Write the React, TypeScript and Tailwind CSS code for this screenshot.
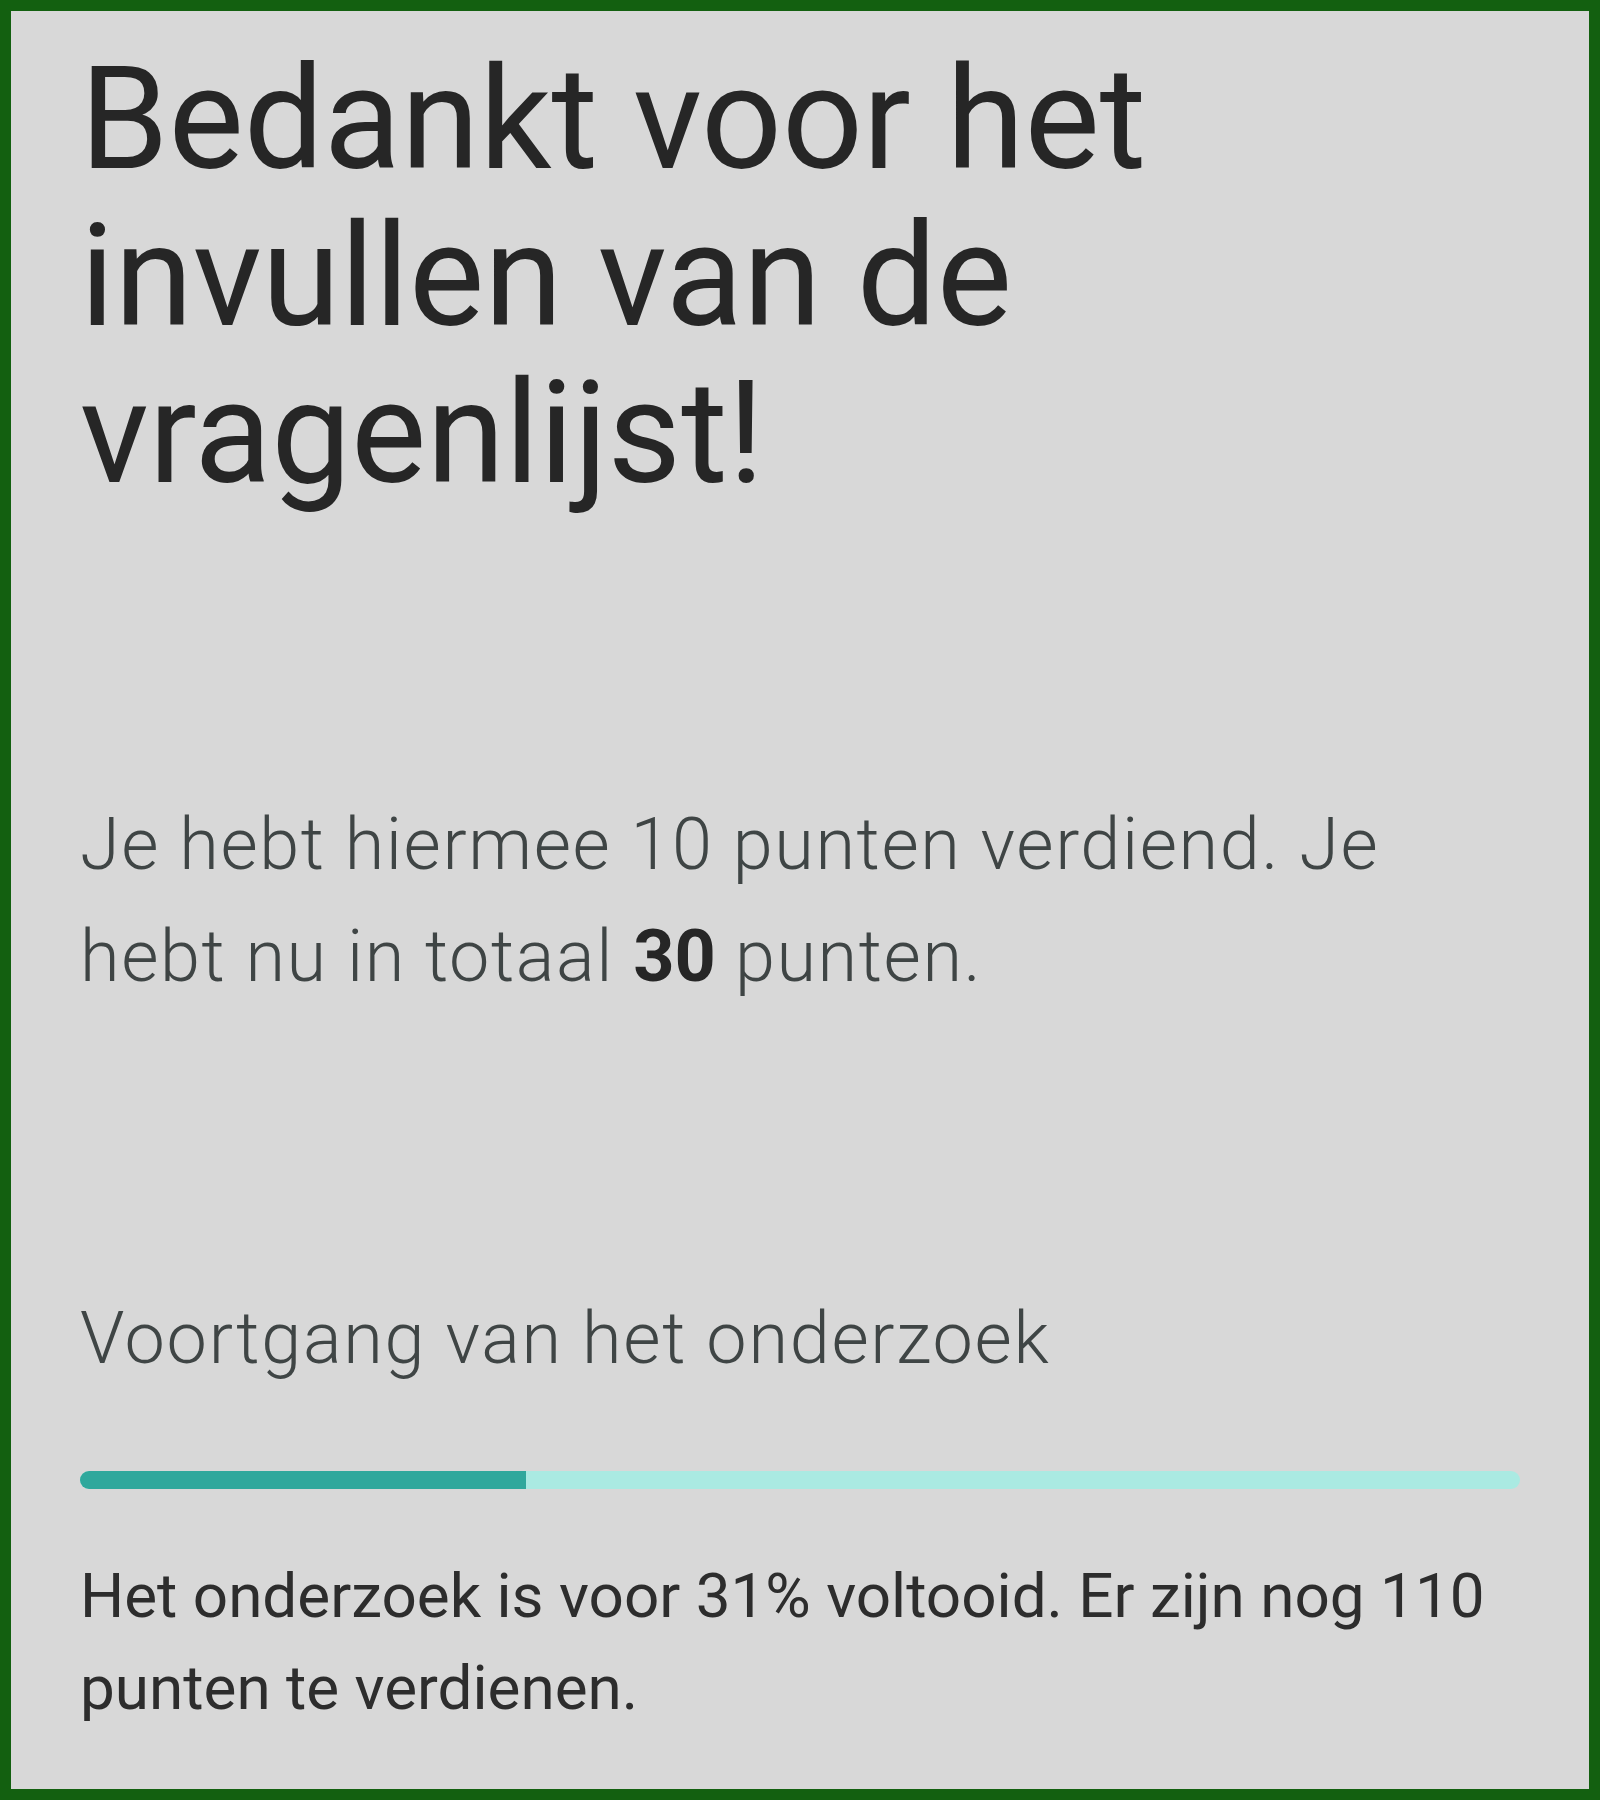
export default function App() {
  return (
    <div className="w-[1600px] h-[1800px] bg-[#136010] p-[11px]">
      <div className="flex h-full w-full flex-col bg-[#d8d8d8] pl-[69px] pr-[69px] pt-[30px]" style={{ fontFamily: "Roboto, 'Noto Sans', sans-serif" }}>
        <h1 className="text-[142px] leading-[157px] font-normal text-[#262626]">
          Bedankt voor het
          <br />
          invullen van de
          <br />
          vragenlijst!
        </h1>

        <p className="mt-[277px] pr-[40px] text-[72px] leading-[112px] font-light tracking-[1.6px] text-[#3f4545]">
          Je hebt hiermee 10 punten verdiend. Je hebt nu in totaal{" "}
          <span className="font-bold tracking-normal text-[#262626]">30</span> punten.
        </p>

        <h2 className="mt-[270px] text-[72px] leading-[112px] font-light tracking-[1.7px] text-[#3f4545]">
          Voortgang van het onderzoek
        </h2>

        <div className="mt-[76px] flex h-[18px] w-[1440px] overflow-hidden rounded-full bg-[#aaeae2]">
          <div className="h-full w-[31%] bg-[#2fa89c]"></div>
        </div>

        <p className="mt-[61px] text-[62px] leading-[92px] font-normal text-[#2d2d2d]">
          Het onderzoek is voor 31% voltooid. Er zijn nog 110 punten te verdienen.
        </p>
      </div>
    </div>
  )
}
